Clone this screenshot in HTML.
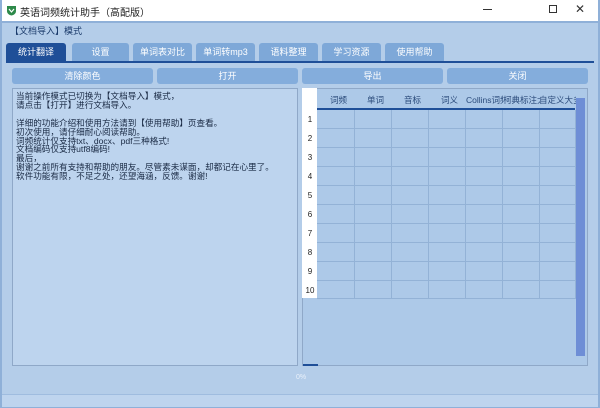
<!DOCTYPE html>
<html><head><meta charset="utf-8"><style>
*{margin:0;padding:0;box-sizing:border-box}
body{width:600px;height:408px;overflow:hidden;background:#b4cde9;font-family:"Liberation Sans","Noto Sans CJK SC",sans-serif;font-size:9px;color:#1a2a44;position:relative}
.a{position:absolute}
.title{left:0;top:0;width:600px;height:21px;background:#fff;border-left:1px solid #8fb0d8;border-right:1px solid #8fb0d8}
.tab{position:absolute;top:43px;height:18px;background:#7ea8d8;color:#fff;border-radius:3px 3px 0 0;text-align:center;line-height:18px;font-size:9px}
.btn{position:absolute;top:68px;height:16px;background:#84addc;color:#fff;border-radius:3px;text-align:center;line-height:16px;font-size:9px}
.hd{position:absolute;top:94px;font-size:8.5px;color:#2a4a7a;width:37px;text-align:center;white-space:nowrap;overflow:hidden}
.rn{position:absolute;left:303px;width:14px;font-size:8px;text-align:center;color:#222}
</style></head><body>
<div class="a title"></div>
<svg class="a" style="left:6px;top:5px" width="11" height="11" viewBox="0 0 11 11"><path d="M1 1h9v5c0 2.5-2 4-4.5 4.5C3 10 1 8.5 1 6z" fill="#2e8a4a"/><path d="M3 4l2.5 3 2.5-3" stroke="#fff" fill="none" stroke-width="1.2"/></svg>
<div class="a" style="left:20px;top:4px;font-size:10px;color:#222">英语词频统计助手（高配版）</div>
<div class="a" style="left:483px;top:9px;width:9px;height:1px;background:#333"></div>
<div class="a" style="left:549px;top:5px;width:8px;height:8px;border:1px solid #333"></div>
<div class="a" style="left:575px;top:2px;font-size:12px;color:#333">✕</div>
<div class="a" style="left:0;top:21px;width:600px;height:2px;background:#8fb0d8"></div>
<div class="a" style="left:10px;top:24px;font-size:9px;color:#1a3a6a">【文档导入】模式</div>
<div class="tab" style="left:6px;width:60px;background:#1f4f98">统计翻译</div>
<div class="tab" style="left:72px;width:57px">设置</div>
<div class="tab" style="left:133px;width:59px">单词表对比</div>
<div class="tab" style="left:196px;width:59px">单词转mp3</div>
<div class="tab" style="left:259px;width:59px">语料整理</div>
<div class="tab" style="left:322px;width:59px">学习资源</div>
<div class="tab" style="left:385px;width:59px">使用帮助</div>
<div class="a" style="left:6px;top:61px;width:588px;height:2px;background:#1f4f98"></div>
<div class="btn" style="left:12px;width:141px">清除颜色</div>
<div class="btn" style="left:157px;width:141px">打开</div>
<div class="btn" style="left:302px;width:141px">导出</div>
<div class="btn" style="left:447px;width:141px">关闭</div>
<div class="a" style="left:12px;top:88px;width:286px;height:278px;background:#bdd4ee;border:1px solid #8fa8c8;padding:3px 3px;font-size:8.6px;line-height:8.9px;color:#1a2a44">当前操作模式已切换为【文档导入】模式，<br>请点击【打开】进行文档导入。<br><br>详细的功能介绍和使用方法请到【使用帮助】页查看。<br>初次使用，请仔细耐心阅读帮助。<br>词频统计仅支持txt、docx、pdf三种格式!<br>文档编码仅支持utf8编码!<br>最后，<br>谢谢之前所有支持和帮助的朋友。尽管素未谋面，却都记在心里了。<br>软件功能有限，不足之处，还望海涵，反馈。谢谢!</div>
<div class="a" style="left:302px;top:88px;width:286px;height:278px;background:#adc9e8;border:1px solid #8fa8c8"></div>
<div class="a" style="left:302px;top:88px;width:15px;height:210px;background:#fff"></div>
<div class="a" style="left:317px;top:108px;width:258px;height:2px;background:#1f4f98"></div>
<svg class="a" style="left:317px;top:110px" width="259" height="189"><g stroke="#93b2d6" stroke-width="1"><path d="M37.5 0V188M74.5 0V188M111.5 0V188M148.5 0V188M185.5 0V188M222.5 0V188M258.5 0V188"/><path d="M0 18.5H259M0 37.5H259M0 56.5H259M0 75.5H259M0 94.5H259M0 113.5H259M0 132.5H259M0 151.5H259M0 170.5H259M0 188.5H259"/></g></svg>
<div class="hd" style="left:320px">词频</div><div class="hd" style="left:357px">单词</div><div class="hd" style="left:394px">音标</div><div class="hd" style="left:431px">词义</div><div class="hd" style="left:466px">Collins词频</div><div class="hd" style="left:503px">柯典标注大</div><div class="hd" style="left:539px">自定义大多</div>
<div class="rn" style="top:115px">1</div><div class="rn" style="top:134px">2</div><div class="rn" style="top:153px">3</div><div class="rn" style="top:172px">4</div><div class="rn" style="top:191px">5</div><div class="rn" style="top:210px">6</div><div class="rn" style="top:229px">7</div><div class="rn" style="top:248px">8</div><div class="rn" style="top:267px">9</div><div class="rn" style="top:286px">10</div>
<div class="a" style="left:576px;top:98px;width:9px;height:258px;background:#6e8ed6"></div>
<div class="a" style="left:303px;top:364px;width:15px;height:2px;background:#1f4f98"></div>
<div class="a" style="left:296px;top:374px;font-size:7px;color:#e8f0fa">0%</div>
<div class="a" style="left:0;top:394px;width:600px;height:1px;background:#9fbcdf"></div>
<div class="a" style="left:0;top:395px;width:600px;height:13px;background:#bed4ee;border-bottom:1px solid #8fb0d8"></div>
<div class="a" style="left:0;top:0;width:2px;height:408px;background:#8fb0d8"></div>
<div class="a" style="left:598px;top:0;width:2px;height:408px;background:#8fb0d8"></div>
</body></html>
